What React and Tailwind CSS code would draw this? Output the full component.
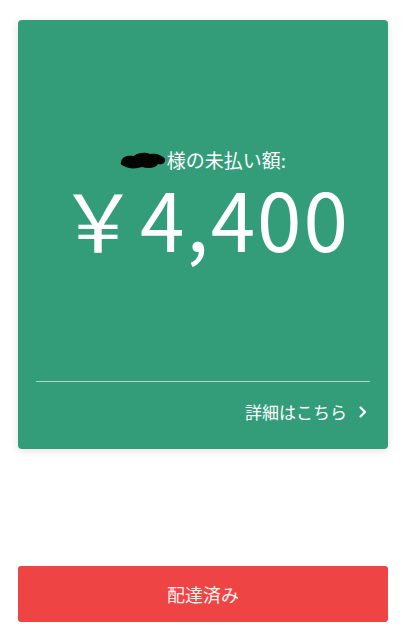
export default function App() {
  const jp = { fontFamily: '"Noto Sans CJK JP", "Noto Sans", sans-serif' };
  return (
    <div className="min-h-[640px] w-full bg-white" style={jp}>
      <div className="px-[18px] pt-[20px]">
        <div className="flex flex-col rounded-[4px] bg-[#339d79] px-[18px] pt-[126px] pb-[25px] text-white shadow-[0_2px_8px_rgba(0,0,0,0.12)]">
          <div className="flex items-center justify-center text-[19px] leading-[28px]">
            <svg width="46" height="20" viewBox="0 0 46 20" className="mr-[1px] shrink-0">
              <path d="M1 12 C2 6 8 5 14 6 C18 2 26 2 30 4 C36 3 42 5 45 9 C46 13 42 15 38 14 C36 18 28 19 22 17 C16 19 8 19 4 16 C1 15 0 14 1 12 Z" fill="#050505" />
            </svg>
            <span>様の未払い額:</span>
          </div>
          <div className="mt-[3px] pl-[2px] text-center text-[80px] font-normal leading-[80px] tracking-[2px]">￥4,400</div>
          <div className="mt-[124px] h-px bg-white/60" />
          <div className="mt-[18px] flex items-center justify-end pr-[2px] text-[17px] leading-[24px]">
            <span>詳細はこちら</span>
            <svg width="10" height="14" viewBox="0 0 10 14" className="ml-[11px]">
              <path d="M2.5 2.5 L7 7 L2.5 11.5" stroke="white" strokeWidth="2.2" fill="none" strokeLinecap="round" strokeLinejoin="round" />
            </svg>
          </div>
        </div>
        <div className="mt-[117px] flex h-[56px] items-center justify-center rounded-[3px] bg-[#ef4444] text-[18px] text-[#fdf2f2]">
          配達済み
        </div>
      </div>
    </div>
  );
}
